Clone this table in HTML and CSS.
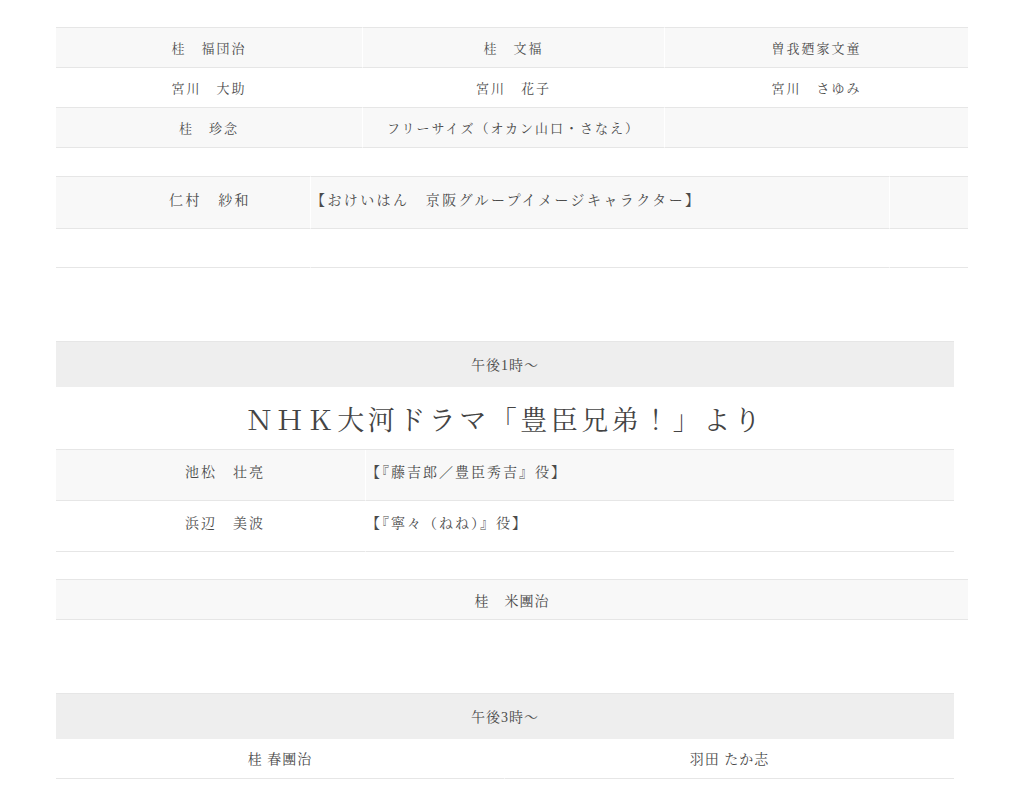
FILE: index.html
```html
<!DOCTYPE html>
<html lang="ja">
<head>
<meta charset="utf-8">
<link rel="stylesheet" href="styles.css">
</head>
<body>
<div class="page">
  <table class="cast cast-three">
    <colgroup>
      <col class="c3-a">
      <col class="c3-b">
      <col class="c3-c">
    </colgroup>
    <tr>
      <td>桂　福団治</td>
      <td>桂　文福</td>
      <td>曽我廼家文童</td>
    </tr>
    <tr>
      <td>宮川　大助</td>
      <td>宮川　花子</td>
      <td>宮川　さゆみ</td>
    </tr>
    <tr>
      <td>桂　珍念</td>
      <td>フリーサイズ（オカン山口・さなえ）</td>
      <td></td>
    </tr>
  </table>

  <table class="cast cast-guest">
    <colgroup>
      <col class="cg-a">
      <col class="cg-b">
      <col class="cg-c">
    </colgroup>
    <tr class="guest-row">
      <td class="g-name">仁村　紗和</td>
      <td class="g-role">【おけいはん　京阪グループイメージキャラクター】</td>
      <td></td>
    </tr>
    <tr class="blank">
      <td></td>
      <td></td>
      <td></td>
    </tr>
  </table>

  <table class="cast section section-drama">
    <colgroup>
      <col class="cr-a">
      <col class="cr-b">
    </colgroup>
    <tr class="head"><th colspan="2">午後1時〜</th></tr>
    <tr class="title"><td colspan="2">ＮＨＫ大河ドラマ「豊臣兄弟！」より</td></tr>
    <tr class="role-row">
      <td class="r-name">池松　壮亮</td>
      <td class="r-role">【『藤吉郎／豊臣秀吉』役】</td>
    </tr>
    <tr class="role-row">
      <td class="r-name">浜辺　美波</td>
      <td class="r-role">【『寧々（ねね）』役】</td>
    </tr>
  </table>

  <table class="cast single">
    <tr><td>桂　米團治</td></tr>
  </table>

  <table class="cast section section-three">
    <colgroup>
      <col class="cp">
      <col class="cp">
    </colgroup>
    <tr class="head"><th colspan="2">午後3時〜</th></tr>
    <tr class="pair">
      <td>桂 春團治</td>
      <td>羽田 たか志</td>
    </tr>
  </table>
</div>
</body>
</html>
```
FILE: styles.css
```css
html, body {
  margin: 0;
  padding: 0;
  background: #ffffff;
}

body {
  font-family: "Liberation Serif", "Noto Serif CJK JP", serif;
  color: #4a4a4a;
}

.page {
  padding: 27px 0 0 56px;
}

.cast {
  border-collapse: separate;
  border-spacing: 0;
  table-layout: fixed;
}

.cast td, .cast th {
  padding: 0;
  font-weight: normal;
  border-bottom: 1px solid #e6e6e6;
  border-right: 1px solid #ffffff;
  white-space: nowrap;
}

.cast tr:first-child td,
.cast tr:first-child th {
  border-top: 1px solid #e6e6e6;
}

.cast td:last-child, .cast th:last-child {
  border-right: 0;
}

.cast tr:nth-child(odd) td {
  background: #f8f8f8;
}

/* table 1 */
.cast-three {
  width: 912px;
}
.c3-a { width: 307px; }
.c3-b { width: 302px; }
.c3-c { width: 303px; }
.cast-three td {
  height: 39px;
  text-align: center;
  font-size: 13px;
  letter-spacing: 2px;
}

/* table 2 */
.cast-guest {
  width: 912px;
  margin-top: 28px;
}
.cg-a { width: 255px; }
.cg-b { width: 579px; }
.cg-c { width: 78px; }
.cast-guest td {
  font-size: 14px;
  letter-spacing: 2.4px;
}
.guest-row td {
  height: 43px;
  padding-bottom: 8px;
}
.cast-guest tr.blank td {
  height: 38px;
}
.g-name {
  padding-left: 113px !important;
}

/* sections */
.section {
  width: 898px;
  margin-top: 73px;
}
.section .head th {
  background: #eeeeee;
  height: 43px;
  padding-bottom: 2px;
  font-size: 14px;
  letter-spacing: 1px;
  text-align: center;
  border-top: 1px solid #e6e6e6;
  border-bottom: 0;
}
.section .title td {
  background: #ffffff;
  height: 62px;
  text-align: center;
  font-size: 27px;
  letter-spacing: 3.5px;
  border-bottom: 1px solid #e6e6e6;
  color: #444444;
}
.cr-a { width: 310px; }
.cr-b { width: 588px; }
.role-row td {
  height: 42px;
  padding-bottom: 8px;
  font-size: 14px;
  letter-spacing: 2px;
}
.r-name {
  padding-left: 129px !important;
}

.single {
  width: 912px;
  margin-top: 27px;
}
.single td {
  height: 39px;
  text-align: center;
  font-size: 14px;
  letter-spacing: 1px;
}

.cp { width: 449px; }
.section-three .pair td {
  background: #ffffff;
  height: 37px;
  padding-bottom: 2px;
  text-align: center;
  font-size: 14px;
  letter-spacing: 1px;
}
```
